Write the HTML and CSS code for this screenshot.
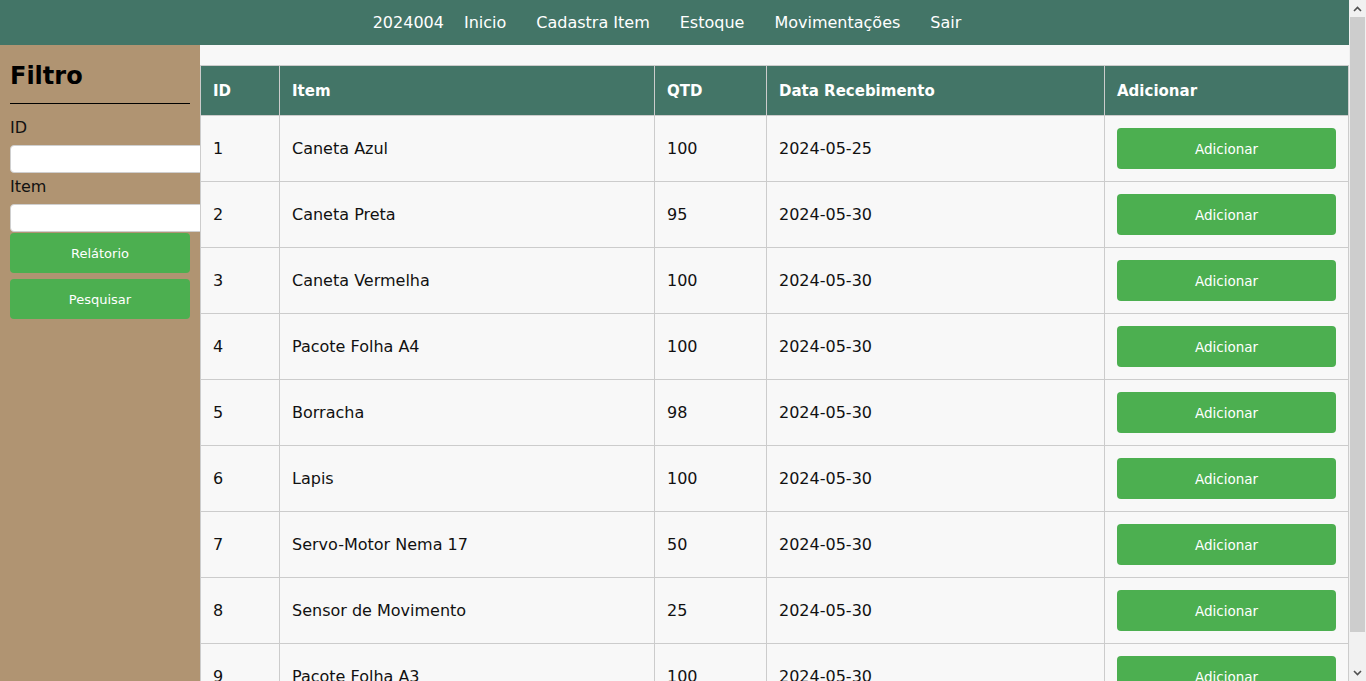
FILE: index.html
```html
<!DOCTYPE html>
<html lang="pt-BR">
<head>
<meta charset="utf-8">
<title>Estoque</title>
<link rel="stylesheet" href="styles.css">
</head>
<body>
<div class="page">
<header class="topbar">
  <nav class="nav">
    <span class="brand">2024004</span>
    <a class="nav-link" href="#">Inicio</a>
    <a class="nav-link" href="#">Cadastra Item</a>
    <a class="nav-link" href="#">Estoque</a>
    <a class="nav-link" href="#">Movimentações</a>
    <a class="nav-link" href="#">Sair</a>
  </nav>
</header>
<div class="layout">
  <aside class="sidebar">
    <h2 class="sidebar-title">Filtro</h2>
    <hr class="sidebar-rule">
    <label class="field-label" for="f-id">ID</label>
    <input class="field-input" id="f-id" type="text">
    <label class="field-label" for="f-item">Item</label>
    <input class="field-input field-last" id="f-item" type="text">
    <button class="side-btn">Relátorio</button>
    <button class="side-btn">Pesquisar</button>
  </aside>
  <main class="content">
    <table class="stock-table">
      <thead>
        <tr>
          <th class="col-id">ID</th>
          <th class="col-item">Item</th>
          <th class="col-qtd">QTD</th>
          <th class="col-date">Data Recebimento</th>
          <th class="col-add">Adicionar</th>
        </tr>
      </thead>
      <tbody>
        <tr><td>1</td><td>Caneta Azul</td><td>100</td><td>2024-05-25</td><td><button class="add-btn">Adicionar</button></td></tr>
        <tr><td>2</td><td>Caneta Preta</td><td>95</td><td>2024-05-30</td><td><button class="add-btn">Adicionar</button></td></tr>
        <tr><td>3</td><td>Caneta Vermelha</td><td>100</td><td>2024-05-30</td><td><button class="add-btn">Adicionar</button></td></tr>
        <tr><td>4</td><td>Pacote Folha A4</td><td>100</td><td>2024-05-30</td><td><button class="add-btn">Adicionar</button></td></tr>
        <tr><td>5</td><td>Borracha</td><td>98</td><td>2024-05-30</td><td><button class="add-btn">Adicionar</button></td></tr>
        <tr><td>6</td><td>Lapis</td><td>100</td><td>2024-05-30</td><td><button class="add-btn">Adicionar</button></td></tr>
        <tr><td>7</td><td>Servo-Motor Nema 17</td><td>50</td><td>2024-05-30</td><td><button class="add-btn">Adicionar</button></td></tr>
        <tr><td>8</td><td>Sensor de Movimento</td><td>25</td><td>2024-05-30</td><td><button class="add-btn">Adicionar</button></td></tr>
        <tr><td>9</td><td>Pacote Folha A3</td><td>100</td><td>2024-05-30</td><td><button class="add-btn">Adicionar</button></td></tr>
      </tbody>
    </table>
  </main>
</div>
</div>
<div class="fake-scrollbar" aria-hidden="true">
  <div class="sb-arrow">
    <svg width="9" height="6" viewBox="0 0 9 6"><path d="M1 5 L4.5 1.5 L8 5" fill="none" stroke="#505050" stroke-width="1.6"/></svg>
  </div>
  <div class="sb-track">
    <div class="sb-thumb"></div>
  </div>
  <div class="sb-arrow">
    <svg width="9" height="6" viewBox="0 0 9 6"><path d="M1 1 L4.5 4.5 L8 1" fill="none" stroke="#505050" stroke-width="1.6"/></svg>
  </div>
</div>
</body>
</html>
```
FILE: styles.css
```css
* { box-sizing: border-box; }

html, body {
  margin: 0;
  padding: 0;
}

body {
  font-family: "DejaVu Sans", "Noto Sans", sans-serif;
  background: #f8f8f8;
  color: #111;
}

.page {
  margin-right: 17px;
}

.fake-scrollbar {
  position: fixed;
  top: 0;
  right: 0;
  width: 17px;
  height: 100vh;
  background: #f1f1f1;
  display: flex;
  flex-direction: column;
}

.sb-arrow {
  height: 17px;
  flex: 0 0 17px;
  display: flex;
  align-items: center;
  justify-content: center;
}

.sb-track {
  flex: 1;
  display: flex;
  flex-direction: column;
  padding: 0 0 32px;
}

.sb-thumb {
  flex: 1;
  background: #cdcdcd;
  margin: 0 1px;
}

.topbar {
  height: 45px;
  background: #437567;
  display: flex;
  align-items: center;
  justify-content: center;
}

.nav {
  display: flex;
  align-items: center;
}

.brand {
  color: #fff;
  font-size: 16px;
  margin-right: 5px;
}

.nav-link {
  color: #fff;
  text-decoration: none;
  font-size: 16px;
  padding: 0 15px;
}

.layout {
  display: flex;
  align-items: stretch;
}

.sidebar {
  width: 200px;
  flex: 0 0 200px;
  background: #b09472;
  padding: 10px;
  overflow: hidden;
}

.sidebar-title {
  margin: 3px 0 0;
  font-size: 24px;
  font-weight: bold;
  line-height: 36px;
  color: #000;
}

.sidebar-rule {
  margin: 9px 0 13px;
  border: 0;
  border-top: 1px solid #000;
  height: 0;
}

.field-label {
  display: block;
  font-size: 16px;
  line-height: 22px;
  color: #111;
  margin-bottom: 6px;
}

.field-input {
  display: block;
  width: 210px;
  height: 28px;
  border: 1px solid #cfcfcf;
  border-radius: 4px;
  background: #fff;
  padding: 4px 8px;
  margin: 0 0 3px;
  font-family: inherit;
}

.field-last {
  margin-bottom: 1px;
}

.side-btn {
  display: block;
  width: 180px;
  height: 40px;
  margin: 0 0 6px;
  border: 0;
  border-radius: 4px;
  background: #4caf50;
  color: #fff;
  font-family: inherit;
  font-size: 13px;
}

.content {
  flex: 1;
  padding-top: 20px;
  background: #f8f8f8;
  min-width: 0;
}

.stock-table {
  width: 100%;
  border-collapse: collapse;
  background: #f8f8f8;
}

.stock-table th,
.stock-table td {
  border: 1px solid #cccccc;
  padding: 12px;
  text-align: left;
  font-size: 16px;
}

.stock-table th {
  background: #437567;
  color: #fff;
  font-weight: bold;
  font-size: 15px;
  height: 50px;
}

.stock-table td {
  height: 66px;
}

.col-id { width: 79px; }
.col-item { width: 375px; }
.col-qtd { width: 112px; }
.col-date { width: 338px; }

.add-btn {
  display: block;
  width: 100%;
  height: 41px;
  border: 0;
  border-radius: 4px;
  background: #4caf50;
  color: #fff;
  font-family: inherit;
  font-size: 13.5px;
}
```
